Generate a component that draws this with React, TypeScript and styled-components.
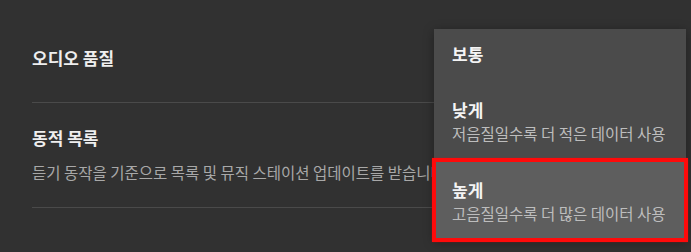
import React from 'react';
import styled, { createGlobalStyle } from 'styled-components';

const GlobalStyle = createGlobalStyle`
	html, body {
		margin: 0;
		padding: 0;
		background: #313131;
	}

	body {
		font-family: "Noto Sans CJK KR", "Noto Sans", sans-serif;
		color: #f1f1f1;
		overflow: hidden;
	}
`;

const Page = styled.div`
	position: relative;
	width: 691px;
	height: 252px;
	padding: 0 32px;
	box-sizing: border-box;
	background: #313131;
	overflow: hidden;
`;

const SettingRow = styled.div<{ $top: number; $bottom: number }>`
	padding: ${(p) => p.$top}px 0 ${(p) => p.$bottom}px;
	border-bottom: 1px solid #4a4a4a;
	display: flex;
	flex-direction: column;
	white-space: nowrap;
`;

const SettingTitle = styled.div`
	font-size: 17px;
	line-height: 22px;
	font-weight: 700;
	color: #eeeeee;
`;

const SettingHint = styled.div`
	margin-top: 13px;
	font-size: 15.5px;
	line-height: 20px;
	color: #a8a8a8;
`;

const Menu = styled.ul`
	position: absolute;
	left: 434px;
	top: 29px;
	width: 252px;
	margin: 0;
	padding: 0;
	list-style: none;
	background: #4b4b4b;
	box-shadow: 0 2px 10px rgba(0, 0, 0, 0.35);
`;

const MenuItem = styled.li<{ $active?: boolean; $tall?: boolean }>`
	position: relative;
	box-sizing: border-box;
	height: ${(p) => (p.$tall ? 80 : 51)}px;
	padding: ${(p) => (p.$tall ? '19px 18px 0' : '14px 18px 0')};
	background: ${(p) => (p.$active ? '#5e5e5e' : 'transparent')};
	${(p) => p.$active && `
		outline: 4px solid #ff0a0a;
		outline-offset: -2px;
		box-shadow: 0 0 2px 2px rgba(255, 0, 0, 0.35);
	`}
`;

const ItemTitle = styled.div`
	font-size: 17px;
	line-height: 22px;
	font-weight: 700;
	color: #f4f4f4;
`;

const ItemHint = styled.div`
	margin-top: 2px;
	font-size: 15.5px;
	line-height: 20px;
	color: #bdbdbd;
	white-space: nowrap;
`;

const options = [
	{ label: '보통' },
	{ label: '낮게', hint: '저음질일수록 더 적은 데이터 사용' },
	{ label: '높게', hint: '고음질일수록 더 많은 데이터 사용', active: true },
];

export default function App() {
	return (
		<>
			<GlobalStyle />
			<Page>
				<SettingRow $top={47} $bottom={33}>
					<SettingTitle>오디오 품질</SettingTitle>
				</SettingRow>
				<SettingRow $top={24} $bottom={25}>
					<SettingTitle>동적 목록</SettingTitle>
					<SettingHint>듣기 동작을 기준으로 목록 및 뮤직 스테이션 업데이트를 받습니다</SettingHint>
				</SettingRow>
				<Menu>
					{options.map((o) => (
						<MenuItem key={o.label} $tall={!!o.hint} $active={o.active}>
							<ItemTitle>{o.label}</ItemTitle>
							{o.hint && <ItemHint>{o.hint}</ItemHint>}
						</MenuItem>
					))}
				</Menu>
			</Page>
		</>
	);
}
